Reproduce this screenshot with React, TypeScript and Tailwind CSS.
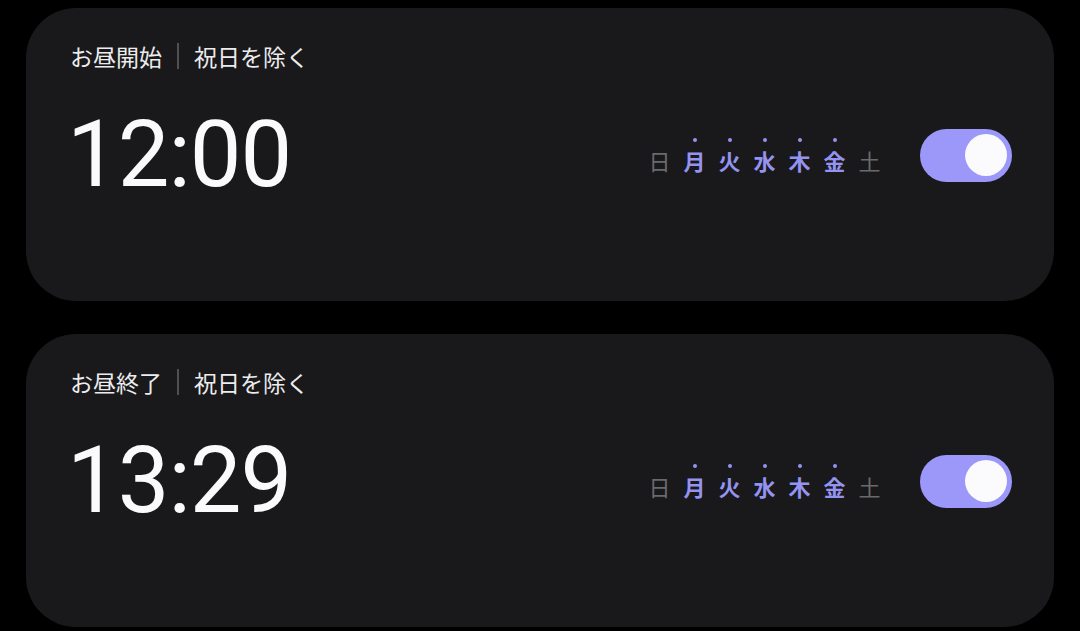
const DAYS = [
  { d: '日', on: false },
  { d: '月', on: true },
  { d: '火', on: true },
  { d: '水', on: true },
  { d: '木', on: true },
  { d: '金', on: true },
  { d: '土', on: false },
]

const ALARMS = [
  { label: 'お昼開始', time: '12:00' },
  { label: 'お昼終了', time: '13:29' },
]

function Toggle() {
  return (
    <div className="flex h-[53px] w-[92px] items-center justify-end rounded-full bg-[#9b98fa] pr-[5px]">
      <div className="h-[42px] w-[42px] rounded-full bg-[#fbfbfd]" />
    </div>
  )
}

function AlarmCard({ label, time }: { label: string; time: string }) {
  return (
    <div className="flex h-[293px] flex-col rounded-[50px] bg-[#19191b] pl-[44px] pr-[42px] pt-[34px]">
      <div className="flex items-center text-[23px] leading-[28px] text-[#ececee] [font-family:'Noto_Sans_CJK_JP',sans-serif]">
        <span>{label}</span>
        <span className="mx-[15px] h-[26px] w-[2px] bg-[#505053]" />
        <span>祝日を除く</span>
      </div>
      <div className="mt-[40px] flex items-center justify-between">
        <div className="ml-[-3px] text-[92px] leading-[90px] tracking-[-1px] text-[#fafafc] [font-family:Roboto,sans-serif]">
          {time}
        </div>
        <div className="flex items-center gap-[33px]">
          <div className="flex items-center">
            {DAYS.map((x) => (
              <div key={x.d} className="flex w-[35px] flex-col items-center">
                <span
                  className={
                    x.on
                      ? 'mb-[6px] h-[4px] w-[4px] rounded-full bg-[#9593f0]'
                      : 'mb-[6px] h-[4px] w-[4px]'
                  }
                />
                <span
                  className={
                    x.on
                      ? 'text-[22px] leading-[24px] font-bold text-[#9593f0] [font-family:"Noto_Sans_CJK_JP",sans-serif]'
                      : 'text-[22px] leading-[24px] text-[#6a6a6d] [font-family:"Noto_Sans_CJK_JP",sans-serif]'
                  }
                >
                  {x.d}
                </span>
              </div>
            ))}
          </div>
          <Toggle />
        </div>
      </div>
    </div>
  )
}

export default function App() {
  return (
    <div className="flex min-h-[631px] flex-col gap-[33px] bg-black pl-[26px] pr-[26px] pt-[8px]">
      {ALARMS.map((a) => (
        <AlarmCard key={a.time} label={a.label} time={a.time} />
      ))}
    </div>
  )
}
